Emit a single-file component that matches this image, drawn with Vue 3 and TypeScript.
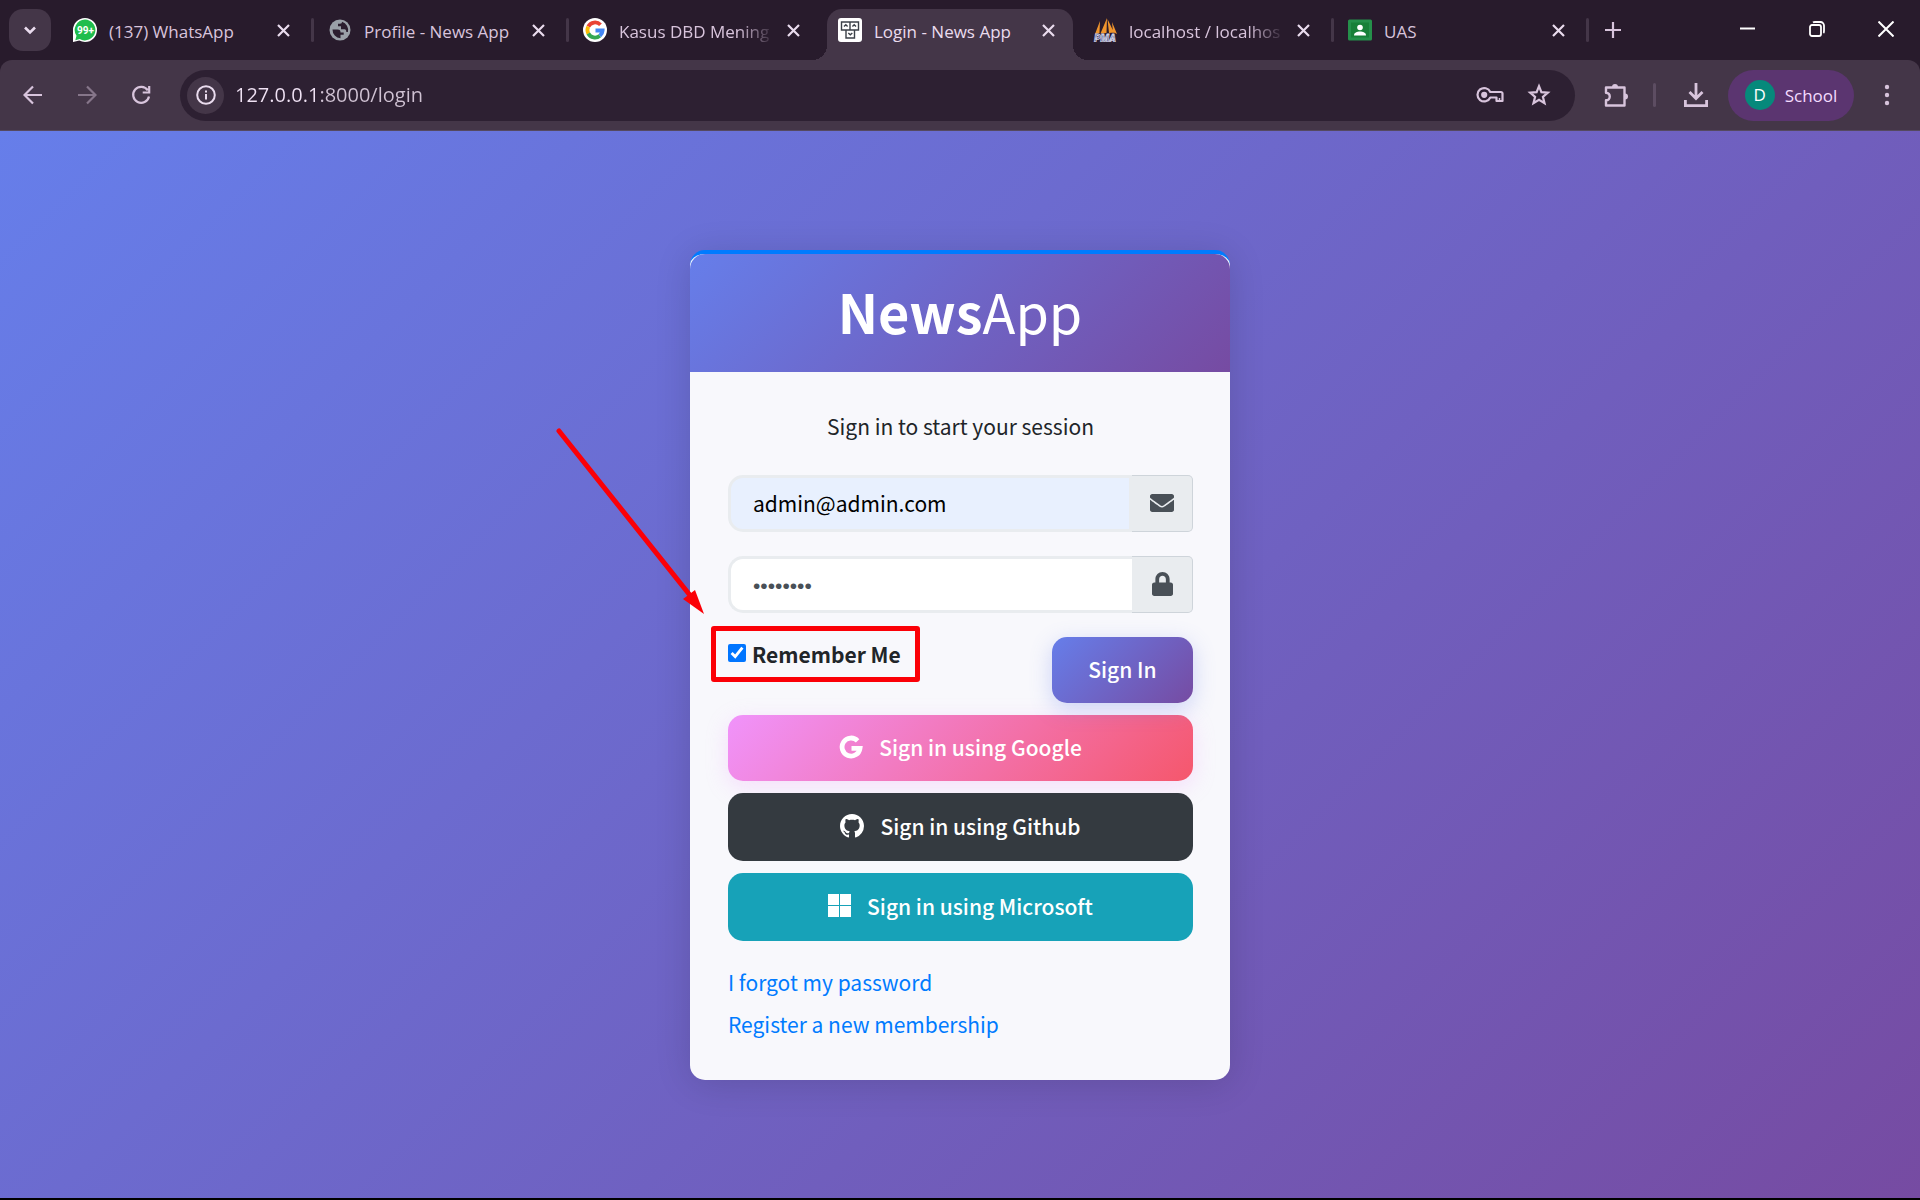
<script setup lang="ts">
import { ref } from 'vue'

interface Tab {
  icon: 'whatsapp' | 'globe' | 'google' | 'news' | 'pma' | 'classroom'
  title: string
  active?: boolean
  divider?: boolean
  faded?: boolean
}

const tabs: Tab[] = [
  { icon: 'whatsapp', title: '(137) WhatsApp', divider: true },
  { icon: 'globe', title: 'Profile - News App', divider: true },
  { icon: 'google', title: 'Kasus DBD Mening', faded: true },
  { icon: 'news', title: 'Login - News App', active: true },
  { icon: 'pma', title: 'localhost / localhos', divider: true, faded: true },
  { icon: 'classroom', title: 'UAS', divider: true },
]

const address = ref('127.0.0.1:8000/login')
const email = ref('admin@admin.com')
const password = ref('password')
const remember = ref(true)
</script>

<template>
  <div class="window">
    <header class="tabstrip">
      <button class="tab-search" aria-label="Search tabs">
        <svg width="14" height="14" viewBox="0 0 14 14"><path d="M2 4.5l5 5 5-5" fill="none" stroke="#eadcee" stroke-width="2.6" /></svg>
      </button>
      <nav class="tabs">
        <div v-for="tab in tabs" :key="tab.title" class="tab" :class="{ active: tab.active, divider: tab.divider, faded: tab.faded }">
          <svg v-if="tab.icon === 'whatsapp'" class="favicon" viewBox="0 0 24 24">
            <path d="M12 0a12 12 0 0 1 0 24c-2 0-4-.5-5.700-1.400L0 24V12A12 12 0 0 1 12 0z" fill="#fff" />
            <path d="M12 1.600a10.400 10.400 0 1 1-5.200 19.400l-4.500 1.200 1.200-4.400A10.400 10.400 0 0 1 12 1.600z" fill="#1fbd4d" />
            <text x="12.500" y="16" text-anchor="middle" font-family="Roboto, sans-serif" font-weight="700" font-size="10" fill="#fff">99+</text>
          </svg>
          <svg v-else-if="tab.icon === 'globe'" class="favicon" viewBox="0 0 24 24">
            <circle cx="12" cy="12" r="10.500" fill="#9aa0a8" />
            <path d="M4.500 11.500h5c2.500 0 3 1.200 3 3h3.200v2.300h-3.200v3.400A8.600 8.600 0 0 1 4.500 11.500zM14 3.800c0 1-.5 2-2 2h-2v2.500h3v3h3.500c1.500 0 1.800 1.500 1.800 2.700h1.600A8.600 8.600 0 0 0 14 3.800z" fill="#2b1e2f" />
          </svg>
          <svg v-else-if="tab.icon === 'google'" class="favicon" viewBox="0 0 24 24">
            <circle cx="12" cy="12" r="12" fill="#fff" />
            <g fill="none" stroke-width="3.800">
              <path d="M17.500 6.800A7.600 7.600 0 0 0 5.300 8.500" stroke="#ea4335" />
              <path d="M5.300 8.500a7.600 7.600 0 0 0 0 7" stroke="#fbbc05" />
              <path d="M5.300 15.500a7.600 7.600 0 0 0 11.600 2.300" stroke="#34a853" />
              <path d="M16.900 17.800a7.600 7.600 0 0 0 2.700-5.300H12.500" stroke="#4285f4" />
            </g>
          </svg>
          <svg v-else-if="tab.icon === 'news'" class="favicon" viewBox="0 0 24 24">
            <rect width="24" height="24" rx="3" fill="#fff" />
            <g fill="none" stroke="#3b4048" stroke-width="1.400">
              <path d="M3.500 4h17v8h-17zM12 4v8M8 12h8.500v8H8z" />
              <path d="M6 8.500l1.800-1.800 1.800 1.800M14.400 8.500l1.800-1.800L18 8.500M10.300 15l2 1.800 2-1.800" />
            </g>
          </svg>
          <svg v-else-if="tab.icon === 'pma'" class="favicon" viewBox="0 0 24 24">
            <path d="M7 3L2 16l4.500-1zM14 0L7.500 15.500l6-.5zM14.500 1l1.500 14 5-.5zM19 4l1 10 4 2z" fill="#f0952d" />
            <text x="12" y="24" text-anchor="middle" font-family="Roboto, sans-serif" font-weight="900" font-style="italic" font-size="10" fill="#4c4f86" stroke="#cfd0e4" stroke-width=".8">PMA</text>
          </svg>
          <svg v-else class="favicon" viewBox="0 0 24 24">
            <rect y="1.500" width="24" height="21" rx="1.500" fill="#25904a" />
            <rect x="3" y="4.500" width="18" height="15" fill="#188038" />
            <circle cx="12" cy="9.500" r="2.800" fill="#fff" />
            <path d="M6 17.500c0-3 3-4 6-4s6 1 6 4z" fill="#fff" />
          </svg>
          <span class="tab-title">{{ tab.title }}</span>
          <button class="tab-close" :aria-label="`Close ${tab.title}`">
            <svg width="13" height="13" viewBox="0 0 13 13"><path d="M1 1l11 11M12 1L1 12" stroke="currentColor" stroke-width="2.200" /></svg>
          </button>
        </div>
      </nav>
      <button class="new-tab" aria-label="New tab">
        <svg width="16" height="16" viewBox="0 0 16 16"><path d="M8 0v16M0 8h16" stroke="#d8c4dc" stroke-width="2.200" /></svg>
      </button>
      <div class="window-controls">
        <button aria-label="Minimize"><svg width="16" height="16" viewBox="0 0 16 16"><path d="M0 7.500h15" stroke="#fff" stroke-width="2" /></svg></button>
        <button aria-label="Restore">
          <svg width="16" height="16" viewBox="0 0 16 16" fill="none" stroke="#fff" stroke-width="1.800"><rect x="1" y="4" width="11" height="11" rx="2" /><path d="M4 1.500C4.600 1 5.200 1 6 1h5.500A3.500 3.500 0 0 1 15 4.500V10c0 .9 0 1.500-.6 2" /></svg>
        </button>
        <button aria-label="Close window"><svg width="16" height="16" viewBox="0 0 16 16"><path d="M.5.5l15 15M15.500.5l-15 15" stroke="#fff" stroke-width="2" /></svg></button>
      </div>
    </header>

    <div class="toolbar-wrap">
      <div class="toolbar">
        <div class="nav-buttons">
          <button aria-label="Back"><svg width="20" height="20" viewBox="0 0 20 20"><path d="M19 10H2.500M10 1.500L1.500 10l8.500 8.500" fill="none" stroke="#d8c4dc" stroke-width="2.200" /></svg></button>
          <button aria-label="Forward" disabled><svg width="20" height="20" viewBox="0 0 20 20"><path d="M1 10h16.500M10 1.500l8.500 8.500-8.500 8.500" fill="none" stroke="#86768a" stroke-width="2.200" /></svg></button>
          <button aria-label="Reload"><svg width="20" height="20" viewBox="0 0 20 20"><path d="M16.800 5.300A8 8 0 1 0 18 11.500M18.200 1v6.500h-6.500" fill="none" stroke="#d8c4dc" stroke-width="2.200" /></svg></button>
        </div>
        <div class="omnibox">
          <button class="site-info" aria-label="Site information">
            <svg width="20" height="20" viewBox="0 0 20 20"><circle cx="10" cy="10" r="8.800" fill="none" stroke="#eadcee" stroke-width="2" /><path d="M10 9v5.500M10 5.500v2" stroke="#eadcee" stroke-width="2" /></svg>
          </button>
          <input v-model="address" class="address" type="text" aria-label="Address" spellcheck="false" />
          <button aria-label="Passwords">
            <svg width="28" height="18" viewBox="0 0 28 18" fill="none" stroke="#d8c4dc" stroke-width="2.200"><path d="M14.300 6H25a1.500 1.500 0 0 1 1.500 1.500V15h-6v-3.500h-6.200A6.700 6.700 0 1 1 14.300 6z" stroke-linejoin="round" /><circle cx="8.200" cy="8.800" r="2" fill="#d8c4dc" /><path d="M23.500 15v-3" stroke-width="1.500" /></svg>
          </button>
          <button aria-label="Bookmark this tab">
            <svg width="24" height="24" viewBox="0 0 24 24"><path d="M12 3.200l2.400 6 6.400.5-4.900 4.100 1.600 6.300-5.500-3.400-5.500 3.400 1.600-6.300-4.900-4.100 6.400-.5z" fill="none" stroke="#d8c4dc" stroke-width="2.200" /></svg>
          </button>
        </div>
        <button class="extensions" aria-label="Extensions">
          <svg width="26" height="26" viewBox="0 0 26 26"><path d="M3 5.500h18.500v18H3v-5.200c5 0 5-7.600 0-7.600z" fill="none" stroke="#d8c4dc" stroke-width="2.400" stroke-linejoin="round" /><path d="M9 5a3 3 0 0 1 6 0zM22 11.500a3 3 0 0 1 0 6z" fill="#d8c4dc" /></svg>
        </button>
        <span class="rule"></span>
        <button class="download" aria-label="Downloads">
          <svg width="24" height="24" viewBox="0 0 24 24" fill="none" stroke="#d8c4dc" stroke-width="2.800"><path d="M12 0v15M5.500 9l6.500 6.500L18.500 9M1.400 17v5.600h21.200V17" /></svg>
        </button>
        <button class="profile"><span class="avatar">D</span>School</button>
        <button class="menu" aria-label="Menu">
          <svg width="6" height="22" viewBox="0 0 6 22" fill="#d8c4dc"><circle cx="3" cy="3" r="2.200" /><circle cx="3" cy="11" r="2.200" /><circle cx="3" cy="19" r="2.200" /></svg>
        </button>
      </div>
    </div>

    <main class="page">
      <section class="card">
        <div class="card-header"><a class="brand" href="#"><b>News</b>App</a></div>
        <div class="card-body">
          <p class="lead">Sign in to start your session</p>
          <form @submit.prevent>
            <div class="field">
              <input v-model="email" class="filled" type="email" aria-label="Email" />
              <span class="addon">
                <svg width="24" height="24" viewBox="0 0 512 512" fill="#495057"><path d="M502.300 190.800c3.900-3.100 9.700-.2 9.700 4.700V400c0 26.500-21.500 48-48 48H48c-26.500 0-48-21.500-48-48V195.600c0-5 5.700-7.800 9.700-4.700 22.400 17.400 52.100 39.500 154.100 113.600 21.100 15.400 56.700 47.800 92.200 47.600 35.700.3 72-32.800 92.300-47.600 102-74.100 131.600-96.300 154-113.700zM256 320c23.200.4 56.600-29.200 73.400-41.400 132.700-96.300 142.800-104.700 173.400-128.700 5.800-4.500 9.200-11.500 9.200-18.900v-19c0-26.500-21.500-48-48-48H48c-26.500 0-48 21.500-48 48v19c0 7.400 3.400 14.300 9.200 18.900 30.600 23.900 40.700 32.400 173.400 128.700 16.800 12.200 50.200 41.800 73.400 41.400z" /></svg>
              </span>
            </div>
            <div class="field">
              <input v-model="password" class="secret" type="password" aria-label="Password" />
              <span class="addon">
                <svg width="21" height="24" viewBox="0 0 448 512" fill="#495057"><path d="M400 224h-24v-72C376 68.200 307.800 0 224 0S72 68.200 72 152v72H48c-26.500 0-48 21.500-48 48v192c0 26.500 21.500 48 48 48h352c26.500 0 48-21.500 48-48V272c0-26.500-21.500-48-48-48zm-104 0H152v-72c0-39.700 32.300-72 72-72s72 32.300 72 72v72z" /></svg>
              </span>
            </div>
            <div class="actions">
              <label class="remember" for="remember">
                <input id="remember" v-model="remember" type="checkbox" />
                <span>Remember Me</span>
              </label>
              <button class="btn sign-in" type="submit">Sign In</button>
            </div>
            <button class="btn social google" type="button">
              <svg width="24" height="24" viewBox="0 0 24 24"><path d="M18.600 5.800A9 9 0 1 0 21 13.300H12.500" fill="none" stroke="#fff" stroke-width="4.800" /></svg>
              Sign in using Google
            </button>
            <button class="btn social github" type="button">
              <svg width="24" height="24" viewBox="0 0 16 16"><path fill="#fff" d="M8 0C3.580 0 0 3.580 0 8c0 3.540 2.290 6.530 5.470 7.590.4.070.55-.17.55-.38 0-.19-.01-.82-.01-1.490-2.010.37-2.530-.49-2.690-.94-.09-.23-.48-.94-.82-1.130-.28-.15-.68-.52-.01-.53.63-.01 1.080.58 1.230.82.72 1.210 1.870.87 2.330.66.070-.52.28-.87.51-1.070-1.780-.2-3.640-.89-3.640-3.950 0-.87.31-1.590.82-2.150-.08-.2-.36-1.020.08-2.120 0 0 .67-.21 2.200.82.64-.18 1.320-.27 2-.27s1.360.09 2 .27c1.530-1.040 2.200-.82 2.200-.82.44 1.100.16 1.920.08 2.120.51.56.82 1.270.82 2.150 0 3.070-1.870 3.750-3.650 3.950.29.25.54.73.54 1.480 0 1.070-.01 1.930-.01 2.200 0 .21.15.46.55.38A8 8 0 0 0 16 8c0-4.420-3.580-8-8-8z" /></svg>
              Sign in using Github
            </button>
            <button class="btn social microsoft" type="button">
              <svg width="23" height="23" viewBox="0 0 23 23"><path fill="#fff" d="M0 0h11v11H0zM12 0h11v11H12zM0 12h11v11H0zM12 12h11v11H12z" /></svg>
              Sign in using Microsoft
            </button>
          </form>
          <p class="link"><a href="#">I forgot my password</a></p>
          <p class="link"><a href="#">Register a new membership</a></p>
        </div>
        <svg class="arrow" width="154" height="190" viewBox="0 0 154 190" aria-hidden="true">
          <path d="M4 4L138 172" stroke="#fb0007" stroke-width="5" stroke-linecap="round" />
          <path d="M149 187l-21-15 12-9z" fill="#fb0007" />
        </svg>
      </section>
    </main>
  </div>
</template>

<style>
body {
  margin: 0;
}
</style>

<style scoped>
* {
  box-sizing: border-box;
}
button {
  padding: 0;
  border: 0;
  background: none;
  color: inherit;
  font: inherit;
  display: flex;
  align-items: center;
  justify-content: center;
}
svg {
  flex: none;
  display: block;
}
.window {
  min-height: 100vh;
  display: flex;
  flex-direction: column;
  background: #281b2c;
  border-bottom: 2px solid #000;
  font-family: "Open Sans", "Noto Sans", sans-serif;
  color: #d8c4dc;
}
.tabstrip {
  height: 60px;
  display: flex;
  padding-left: 9px;
}
.tab-search {
  width: 42px;
  height: 42px;
  margin: 9px 11px 0 0;
  border-radius: 14px;
  background: #443648;
}
.tabs {
  display: flex;
}
.tab {
  width: 255px;
  height: 51px;
  margin-top: 9px;
  padding: 0 27px 9px 11px;
  display: flex;
  align-items: center;
  position: relative;
  font-size: 17px;
}
.tab.divider::after {
  content: "";
  position: absolute;
  right: 3px;
  top: 9px;
  width: 3px;
  height: 24px;
  border-radius: 2px;
  background: #443648;
}
.tab.active {
  width: 246px;
  margin-right: 9px;
  padding-right: 18px;
  border-radius: 15px 15px 0 0;
  background: #443648;
  color: #eadcee;
}
.tab.active::before,
.tab.active::after {
  content: "";
  position: absolute;
  bottom: 0;
  width: 15px;
  height: 15px;
}
.tab.active::before {
  right: 100%;
  background: radial-gradient(circle at 0 0, transparent 15px, #443648 15px);
}
.tab.active::after {
  left: 100%;
  background: radial-gradient(circle at 100% 0, transparent 15px, #443648 15px);
}
.favicon {
  width: 24px;
  height: 24px;
}
.tab-title {
  flex: 1;
  min-width: 0;
  margin: 2px 12px 0;
  white-space: nowrap;
}
.tab.faded .tab-title {
  mask-image: linear-gradient(90deg, #000 76%, transparent 100%);
}
.tab-close {
  width: 13px;
  height: 24px;
  color: #eadcee;
}
.new-tab {
  width: 42px;
  height: 60px;
}
.window-controls {
  margin-left: auto;
  display: flex;
}
.window-controls button {
  width: 69px;
  height: 58px;
}
.toolbar-wrap {
  background: #281b2c;
}
.toolbar {
  height: 71px;
  padding: 0 30px 0 23px;
  display: flex;
  align-items: center;
  background: #443648;
  border-bottom: 1px solid #554960;
  border-radius: 12px 12px 0 0;
}
.nav-buttons {
  display: flex;
  gap: 34px;
  margin-right: 29px;
}
.omnibox {
  flex: 1;
  height: 51px;
  padding: 0 24px 0 7px;
  display: flex;
  align-items: center;
  gap: 23px;
  border-radius: 26px;
  background: #2d2032;
}
.site-info {
  width: 37px;
  height: 37px;
  border-radius: 50%;
  background: #443648;
}
.address {
  flex: 1;
  min-width: 0;
  margin-left: -12px;
  padding: 0;
  border: 0;
  outline: 0;
  font: 20px/30px "Open Sans", "Noto Sans", sans-serif;
  color: transparent;
  background: linear-gradient(90deg, #f0e2f4 80px, #d0c2d3 80px);
  background-clip: text;
}
.extensions {
  margin-left: 28px;
}
.rule {
  width: 3px;
  height: 24px;
  margin: 0 28px 0 24px;
  border-radius: 2px;
  background: #5d4d62;
}
.profile {
  width: 126px;
  height: 51px;
  margin: 0 30px 0 20px;
  border-radius: 26px;
  background: #5b3570;
  color: #f4dcff;
  font-size: 17px;
  gap: 10px;
}
.avatar {
  width: 30px;
  height: 30px;
  border-radius: 50%;
  background: #06897b;
  color: #fff;
  font-size: 17px;
  line-height: 30px;
}
.page {
  flex: 1;
  padding: 24px;
  display: flex;
  align-items: center;
  justify-content: center;
  background: linear-gradient(135deg, #667eea 0%, #764ba2 100%);
  font-family: "Noto Sans CJK SC", "Source Sans Pro", sans-serif;
  font-size: 21px;
  line-height: 36px;
  color: #212529;
}
.card {
  width: 540px;
  position: relative;
  border-top: 4px solid #007bff;
  border-radius: 15px;
  background: #f8f8fc;
  box-shadow: 0 4px 36px rgba(0, 0, 0, 0.14);
}
.card-header {
  height: 118px;
  padding-bottom: 4px;
  display: flex;
  align-items: center;
  justify-content: center;
  border-radius: 15px 15px 0 0;
  background: linear-gradient(135deg, #667eea 0%, #764ba2 100%);
}
.brand {
  color: #fff;
  font-size: 54px;
  font-weight: 400;
  line-height: 78px;
  text-decoration: none;
}
.brand b {
  font-weight: 700;
}
.card-body {
  padding: 36px 37px 38px 38px;
}
.card-body p {
  margin: 0;
}
.card-body .lead {
  margin-bottom: 31px;
  text-align: center;
}
.field {
  height: 57px;
  margin-bottom: 24px;
  display: flex;
}
.field input {
  flex: 1;
  min-width: 0;
  padding: 0 22px 1px;
  border: 3px solid #e9ecef;
  border-right: 0;
  border-radius: 15px 0 0 15px;
  outline: 0;
  background: #fff;
  color: #000;
  font: inherit;
}
.field input.filled {
  border-right: 3px solid #e9ecef;
  background: #e8f0fe;
}
.field input.secret {
  padding: 3px 22px 0;
  color: #495057;
  font-family: "Liberation Sans", sans-serif;
}
.addon {
  width: 61px;
  display: flex;
  align-items: center;
  justify-content: center;
  border: 1px solid #ced4da;
  border-left: 0;
  border-radius: 0 5px 5px 0;
  background: #e9ecef;
}
.actions {
  display: flex;
  justify-content: space-between;
  align-items: flex-start;
  margin-bottom: 12px;
}
.remember {
  height: 56px;
  margin: -11px 0 0 -17px;
  padding: 0 14px 0 12px;
  display: flex;
  align-items: center;
  gap: 6px;
  border: 5px solid #fb0007;
  border-radius: 3px;
  font-weight: 700;
}
.remember input {
  width: 18px;
  height: 18px;
  margin: 0 0 2px;
  accent-color: #0075ff;
}
.btn {
  height: 66px;
  padding-bottom: 2px;
  border-radius: 15px;
  color: #fff;
  font-weight: 500;
}
.sign-in {
  width: 141px;
  background: linear-gradient(135deg, #667eea 0%, #764ba2 100%);
  box-shadow: 0 6px 22px rgba(102, 126, 234, 0.3);
}
.social {
  width: 100%;
  height: 68px;
  gap: 16px;
  margin-bottom: 12px;
}
.google {
  height: 66px;
  background: linear-gradient(135deg, #f093fb 0%, #f5576c 100%);
  box-shadow: 0 6px 22px rgba(240, 147, 251, 0.25);
}
.github {
  background: #343a40;
}
.microsoft {
  margin-bottom: 23px;
  background: #17a2b8;
}
.link + .link {
  margin-top: 6px;
}
.link a {
  color: #007bff;
  text-decoration: none;
}
.arrow {
  position: absolute;
  left: -135px;
  top: 173px;
  pointer-events: none;
}
</style>
